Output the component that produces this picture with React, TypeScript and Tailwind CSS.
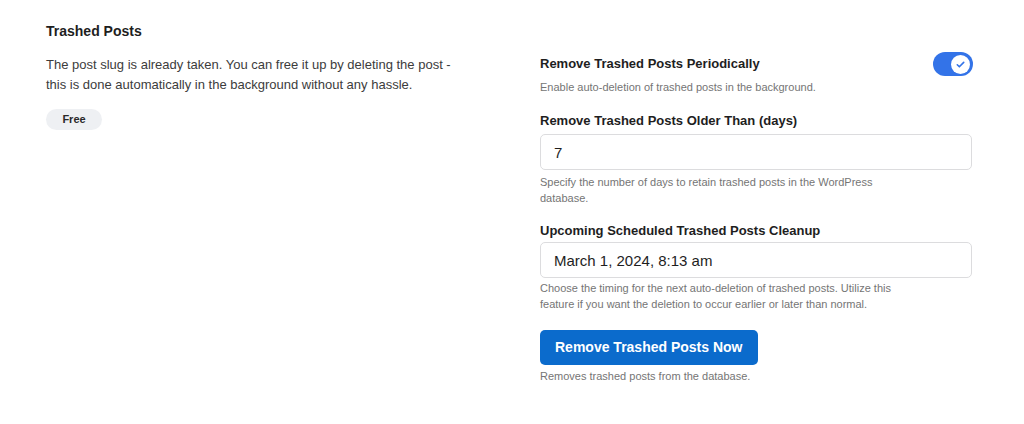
import React, { useState } from 'react';

const Toggle: React.FC<{ on: boolean; onChange: () => void }> = ({ on, onChange }) => (
    <button
        onClick={onChange}
        className={`flex h-[24px] w-[40px] items-center rounded-full px-[3px] ${on ? 'justify-end bg-[#3373e8]' : 'justify-start bg-gray-300'}`}
    >
        <span className="flex h-[19px] w-[19px] items-center justify-center rounded-full bg-white">
            {on && (
                <svg width="11" height="11" viewBox="0 0 24 24" fill="none" stroke="#3373e8" strokeWidth="3.5" strokeLinecap="round" strokeLinejoin="round">
                    <path d="M5 12.5l4.5 4.5L19 7.5" />
                </svg>
            )}
        </span>
    </button>
);

export default function App() {
    const [periodic, setPeriodic] = useState(true);
    const [days, setDays] = useState('7');
    const [schedule, setSchedule] = useState('March 1, 2024, 8:13 am');

    return (
        <div className="min-h-[424px] bg-white pl-[46px] pt-[21px] text-[#1e1e1e]" style={{ fontFamily: '"Liberation Sans", Arial, sans-serif' }}>
            <h2 className="text-[14px] font-bold leading-[20px]">Trashed Posts</h2>

            <div className="mt-[13px] flex">
                {/* left column */}
                <div className="w-[494px]">
                    <p className="mt-[1px] w-[410px] text-[13px] leading-[20px] text-[#3c3c3c]">
                        The post slug is already taken. You can free it up by deleting the post - this is done automatically in the background without any hassle.
                    </p>
                    <span className="mt-[14px] flex h-[21px] w-[56px] items-center justify-center rounded-full bg-[#eef0f3] text-[11px] font-bold text-[#2a2a2a]">
                        Free
                    </span>
                </div>

                {/* right column */}
                <div className="w-[432px]">
                    <div className="flex h-[20px] items-center justify-between">
                        <label className="text-[13px] font-bold leading-[20px]">Remove Trashed Posts Periodically</label>
                        <div className="-my-[2px] -mr-[1px]">
                            <Toggle on={periodic} onChange={() => setPeriodic(!periodic)} />
                        </div>
                    </div>
                    <p className="mt-[5px] text-[11px] leading-[16px] text-[#757575]">
                        Enable auto-deletion of trashed posts in the background.
                    </p>

                    <label className="mt-[16px] block text-[13px] font-bold leading-[20px]">Remove Trashed Posts Older Than (days)</label>
                    <input
                        value={days}
                        onChange={(e) => setDays(e.target.value)}
                        className="mt-[3px] block h-[36px] w-full rounded-[5px] border border-[#dcdcde] px-[13px] text-[15px] text-[#1e1e1e] outline-none"
                    />
                    <p className="mt-[4px] w-[340px] text-[11px] leading-[16px] text-[#757575]">
                        Specify the number of days to retain trashed posts in the WordPress database.
                    </p>

                    <label className="mt-[15px] block text-[13px] font-bold leading-[20px]">Upcoming Scheduled Trashed Posts Cleanup</label>
                    <input
                        value={schedule}
                        onChange={(e) => setSchedule(e.target.value)}
                        className="mt-[1px] block h-[36px] w-full rounded-[5px] border border-[#dcdcde] px-[13px] text-[15px] text-[#1e1e1e] outline-none"
                    />
                    <p className="mt-[2px] w-[370px] text-[11px] leading-[16px] text-[#757575]">
                        Choose the timing for the next auto-deletion of trashed posts. Utilize this feature if you want the deletion to occur earlier or later than normal.
                    </p>

                    <button className="mt-[18px] h-[35px] rounded-[5px] bg-[#0b6bcc] px-[15px] text-[14px] font-bold text-white">
                        Remove Trashed Posts Now
                    </button>
                    <p className="mt-[3px] text-[11px] leading-[16px] text-[#757575]">Removes trashed posts from the database.</p>
                </div>
            </div>
        </div>
    );
}
